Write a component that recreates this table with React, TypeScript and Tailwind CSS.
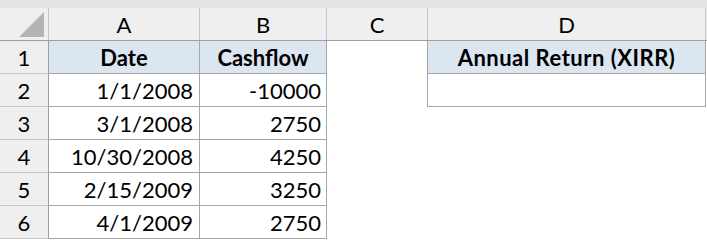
import React from 'react';

const COLS = [
  { key: 'A', w: 'w-[151px]' },
  { key: 'B', w: 'w-[127px]' },
  { key: 'C', w: 'w-[101px]' },
  { key: 'D', w: 'w-[278px]' },
];

const rows: { date: string; cash: string }[] = [
  { date: '1/1/2008', cash: '-10000' },
  { date: '3/1/2008', cash: '2750' },
  { date: '10/30/2008', cash: '4250' },
  { date: '2/15/2009', cash: '3250' },
  { date: '4/1/2009', cash: '2750' },
];

function RowHead({ n }: { n: number }) {
  return (
    <div className="w-[49px] h-[33px] shrink-0 flex items-center justify-center bg-[#efefef] border-r border-b border-r-[#9e9e9e] border-b-[#c6c6c6] pt-[2px]">
      {n}
    </div>
  );
}

export default function App() {
  return (
    <div className="w-[707px] h-[240px] overflow-hidden bg-white text-[22px] leading-none text-black font-['Lato',sans-serif]">
      <div className="h-2 bg-[#e3e3e3]" />

      {/* column letters */}
      <div className="flex h-[33px] bg-[#efefef] border-b border-[#9e9e9e]">
        <div className="w-[49px] shrink-0 border-r border-[#c6c6c6] relative">
          <svg className="absolute left-[19px] top-[4px]" width="25" height="25" viewBox="0 0 25 25">
            <polygon points="25,0 25,25 0,25" fill="#b4b4b4" />
          </svg>
        </div>
        {COLS.map(c => (
          <div key={c.key} className={`${c.w} shrink-0 flex items-center justify-center border-r border-[#c6c6c6] pt-[1px]`}>
            {c.key}
          </div>
        ))}
      </div>

      {/* row 1: headers */}
      <div className="flex">
        <RowHead n={1} />
        <div className="w-[151px] h-[33px] shrink-0 flex items-center justify-center bg-[#dce6f1] border-r border-b border-[#a6a6a6] font-bold pt-[2px]">
          Date
        </div>
        <div className="w-[127px] h-[33px] shrink-0 flex items-center justify-center bg-[#dce6f1] border-r border-b border-[#a6a6a6] font-bold pt-[2px]">
          Cashflow
        </div>
        <div className="w-[101px] h-[33px] shrink-0 border-r border-[#a6a6a6]" />
        <div className="w-[278px] h-[33px] shrink-0 flex items-center justify-center bg-[#dce6f1] border-r border-b border-[#a6a6a6] font-bold pt-[2px] tracking-[0.5px]">
          Annual Return (XIRR)
        </div>
      </div>

      {rows.map((r, i) => (
        <div key={i} className="flex">
          <RowHead n={i + 2} />
          <div className="w-[151px] h-[33px] shrink-0 flex items-center justify-end pr-[6px] border-r border-b border-[#a6a6a6] pt-[2px]">
            {r.date}
          </div>
          <div className="w-[127px] h-[33px] shrink-0 flex items-center justify-end pr-[5px] border-r border-b border-[#a6a6a6] pt-[2px]">
            {r.cash}
          </div>
          {i === 0 && (
            <>
              <div className="w-[101px] h-[33px] shrink-0 border-r border-[#a6a6a6]" />
              <div className="w-[278px] h-[33px] shrink-0 border-r border-b border-[#a6a6a6]" />
            </>
          )}
        </div>
      ))}
    </div>
  );
}
